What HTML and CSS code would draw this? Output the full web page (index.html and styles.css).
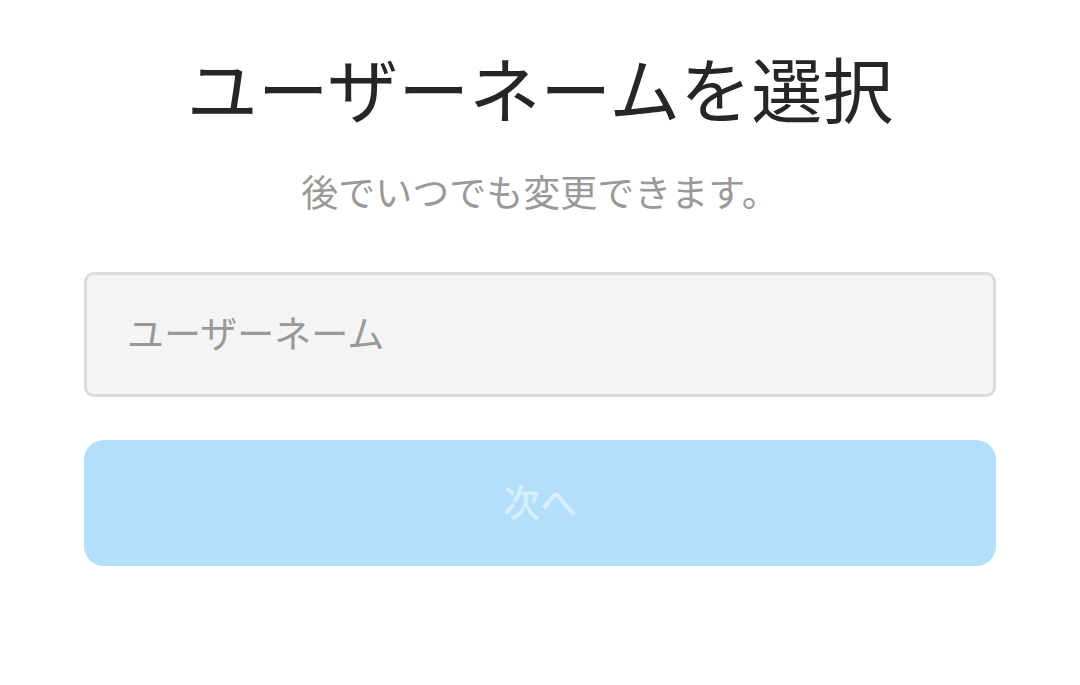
FILE: index.html
```html
<!DOCTYPE html>
<html lang="ja">
<head>
<meta charset="utf-8">
<link rel="stylesheet" href="styles.css">
</head>
<body>
<main class="page">
  <h1 class="title">ユーザーネームを選択</h1>
  <p class="subtitle">後でいつでも変更できます。</p>
  <input class="field" type="text" placeholder="ユーザーネーム">
  <button class="next" type="button" disabled>次へ</button>
</main>
</body>
</html>
```
FILE: styles.css
```css
html, body {
  margin: 0;
  padding: 0;
  background: #ffffff;
}
body {
  font-family: "Noto Sans CJK JP", "Noto Sans", sans-serif;
}
.page {
  display: flex;
  flex-direction: column;
  align-items: stretch;
  padding: 43px 84px 0;
}
.title {
  margin: 0;
  text-align: center;
  font-size: 71px;
  line-height: 86px;
  font-weight: 400;
  color: #262626;
}
.subtitle {
  margin: 40px 0 0;
  text-align: center;
  font-size: 37px;
  line-height: 44px;
  color: #999999;
}
.field {
  margin-top: 59px;
  box-sizing: border-box;
  height: 125px;
  border: 3px solid #dbdbdb;
  border-radius: 10px;
  background: #f4f4f4;
  padding: 0 0 6px 40px;
  font-family: inherit;
  font-size: 37px;
  color: #262626;
  outline: none;
}
.field::placeholder {
  color: #999999;
}
.next {
  margin-top: 43px;
  box-sizing: border-box;
  height: 126px;
  border: none;
  border-radius: 20px;
  background: #b3dffc;
  color: #d9eefc;
  font-family: inherit;
  font-size: 37px;
  font-weight: 500;
  padding: 0 0 4px;
}
```
